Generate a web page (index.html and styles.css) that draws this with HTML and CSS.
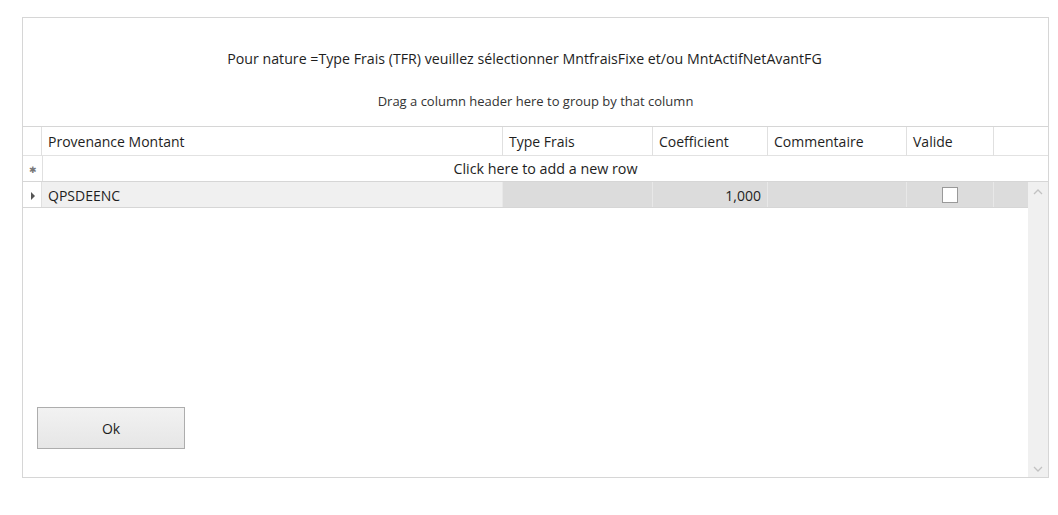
FILE: index.html
```html
<!DOCTYPE html>
<html lang="fr">
<head>
  <meta charset="UTF-8">
  <title>Provenance Montant</title>
  <link rel="stylesheet" href="styles.css">
</head>
<body>
  <div class="dialog">
    <div class="message">Pour nature =Type Frais (TFR) veuillez sélectionner MntfraisFixe et/ou MntActifNetAvantFG</div>
    <div class="group-panel">Drag a column header here to group by that column</div>

    <div class="grid-head">
      <div class="cell indicator"></div>
      <div class="cell">Provenance Montant</div>
      <div class="cell">Type Frais</div>
      <div class="cell">Coefficient</div>
      <div class="cell">Commentaire</div>
      <div class="cell">Valide</div>
      <div class="cell last"></div>
    </div>

    <div class="new-row">
      <div class="indicator">&#x2731;</div>
      <div class="new-text">Click here to add a new row</div>
    </div>

    <div class="grid-body">
      <div class="rows">
        <div class="data-row">
          <div class="cell indicator"><span class="arrow"></span></div>
          <div class="cell current">QPSDEENC</div>
          <div class="cell"></div>
          <div class="cell num">1,000</div>
          <div class="cell"></div>
          <div class="cell check"><span class="box"></span></div>
          <div class="cell last"></div>
        </div>
        <button class="ok">Ok</button>
      </div>
      <div class="scrollbar">
        <svg width="12" height="8" viewBox="0 0 12 8"><path d="M2 6 L6 2 L10 6" fill="none" stroke="#c2c2c2" stroke-width="1.3"/></svg>
        <svg width="12" height="8" viewBox="0 0 12 8"><path d="M2 2 L6 6 L10 2" fill="none" stroke="#c2c2c2" stroke-width="1.3"/></svg>
      </div>
    </div>
  </div>
</body>
</html>
```

FILE: styles.css
```css
body { margin: 0; background: #fff; font-family: "Open Sans", "Noto Sans", sans-serif; color: #1e1e1e; }
.dialog { margin: 17px 0 0 22px; width: 1025px; height: 459px; border: 1px solid #d6d6d6; display: flex; flex-direction: column; }
.message { height: 62px; padding: 31px 22px 0 0; box-sizing: border-box; text-align: center; font-size: 14.2px; line-height: 20px; }
.group-panel { height: 46px; padding-top: 12px; box-sizing: border-box; text-align: center; font-size: 13px; line-height: 18px; color: #333; }

.grid-head, .data-row { display: grid; grid-template-columns: 19px 461px 150px 115px 139px 87px 1fr; }
.grid-head { height: 28px; border-top: 1px solid #d6d6d6; border-bottom: 1px solid #e2e2e2; }
.grid-head .cell { border-right: 1px solid #e0e0e0; padding-left: 6px; font-size: 14px; line-height: 29px; }
.grid-head .indicator, .grid-head .last { padding: 0; }
.grid-head .last { border-right: none; }

.new-row { display: flex; height: 25px; border-bottom: 1px solid #d6d6d6; }
.new-row .indicator { width: 19px; border-right: 1px solid #e0e0e0; text-align: center; font-size: 9px; line-height: 27px; color: #777; }
.new-text { flex: 1; text-align: center; font-size: 14.3px; line-height: 25px; }

.grid-body { flex: 1; display: flex; }
.rows { flex: 1; display: flex; flex-direction: column; }
.data-row { height: 25px; grid-template-rows: 25px; border-bottom: 1px solid #d6d6d6; }
.data-row .cell { background: #dcdcdc; border-right: 1px solid #e8e8e8; font-size: 14px; line-height: 22px; padding: 3px 6px 0; box-sizing: border-box; }
.data-row .indicator { background: #fff; border-right: 1px solid #e0e0e0; padding: 0; display: flex; align-items: center; justify-content: center; }
.data-row .current { background: #f0f0f0; }
.data-row .num { text-align: right; }
.data-row .last { border-right: none; }
.arrow { width: 0; height: 0; border-top: 4px solid transparent; border-bottom: 4px solid transparent; border-left: 4px solid #555; margin: 2px 0 0 2px; }
.check { display: flex; align-items: center; justify-content: center; }
.data-row .check { padding-top: 0; }
.box { width: 14px; height: 14px; border: 1px solid #999; background: #fff; margin-top: 1px; }

.ok { margin: auto 0 28px 14px; width: 148px; height: 42px; border: 1px solid #adadad; background: linear-gradient(#f2f2f2, #e6e6e6); font-family: inherit; font-size: 14px; color: #1e1e1e; }

.scrollbar { width: 20px; background: #f0f0f0; display: flex; flex-direction: column; justify-content: space-between; align-items: center; padding: 6px 0 4px; }
```
